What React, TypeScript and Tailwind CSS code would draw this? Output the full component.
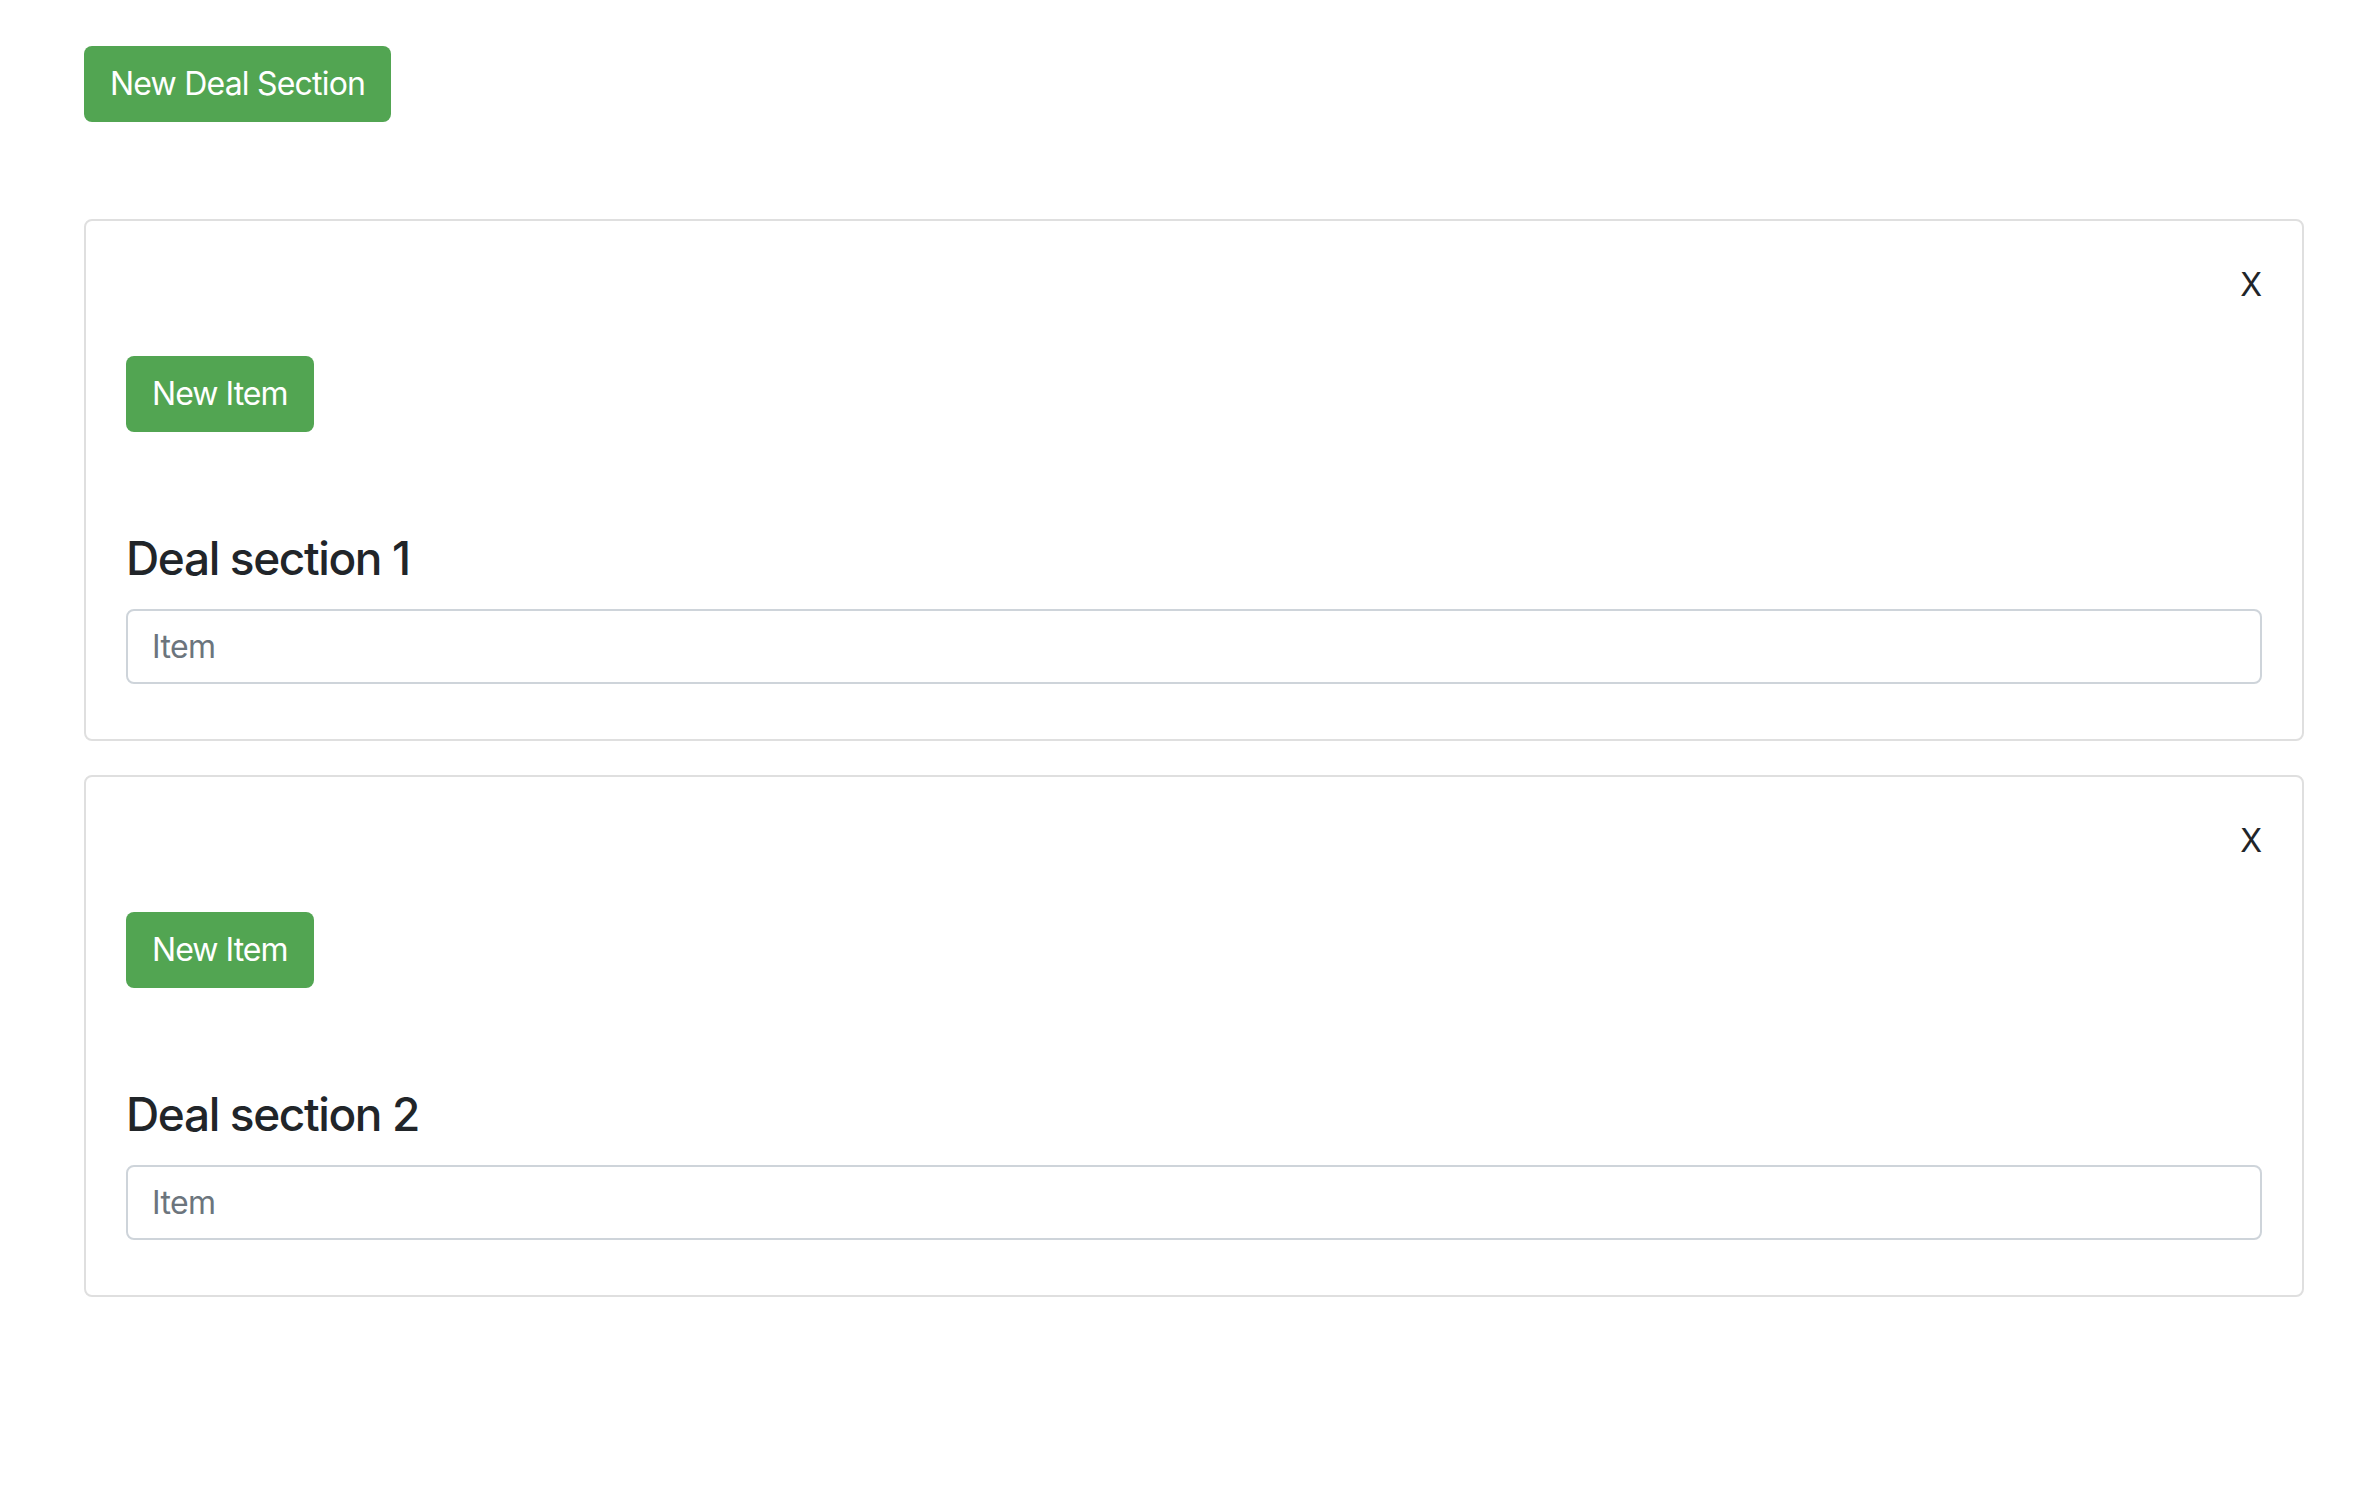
import React, { useState } from 'react';

type Section = { id: number; title: string };

const DealSection = ({ section, onRemove }: { section: Section; onRemove: () => void }) => {
  return (
    <div className="rounded-[8px] border-2 border-[#dfdfdf] bg-white p-[40px]">
      <div className="flex justify-end">
        <button
          type="button"
          onClick={onRemove}
          className="h-[48px] text-[32px] leading-[48px] text-[#212529]"
        >
          X
        </button>
      </div>
      <button
        type="button"
        className="mt-[47px] h-[76px] rounded-[8px] bg-[#52a552] px-[26px] text-[32px] leading-[48px] tracking-[-0.03em] text-white"
      >
        New Item
      </button>
      <h4 className="mt-[97px] h-[58px] text-[46px] font-medium leading-[58px] tracking-[-0.03em] text-[#212529]">
        {section.title}
      </h4>
      <input
        type="text"
        placeholder="Item"
        className="mt-[22px] mb-[15px] block h-[75px] w-full rounded-[8px] border-2 border-[#ced4da] bg-white px-[24px] text-[32px] tracking-[-0.02em] text-[#495057] outline-none placeholder:text-[#6c757d]"
      />
    </div>
  );
};

const App = () => {
  const [sections, setSections] = useState<Section[]>([
    { id: 1, title: 'Deal section 1' },
    { id: 2, title: 'Deal section 2' },
  ]);

  const addSection = () => {
    const next = sections.length + 1;
    setSections([...sections, { id: Date.now(), title: `Deal section ${next}` }]);
  };

  return (
    <div className="min-h-screen bg-white pl-[84px] pr-[60px] pt-[46px] font-['Inter',sans-serif] text-[#212529]">
      <button
        type="button"
        onClick={addSection}
        className="h-[76px] rounded-[8px] bg-[#52a552] px-[26px] text-[32px] leading-[48px] tracking-[-0.025em] text-white"
      >
        New Deal Section
      </button>
      <div className="mt-[97px] flex flex-col gap-[34px]">
        {sections.map((s) => (
          <DealSection
            key={s.id}
            section={s}
            onRemove={() => setSections(sections.filter((x) => x.id !== s.id))}
          />
        ))}
      </div>
    </div>
  );
};

export default App;
